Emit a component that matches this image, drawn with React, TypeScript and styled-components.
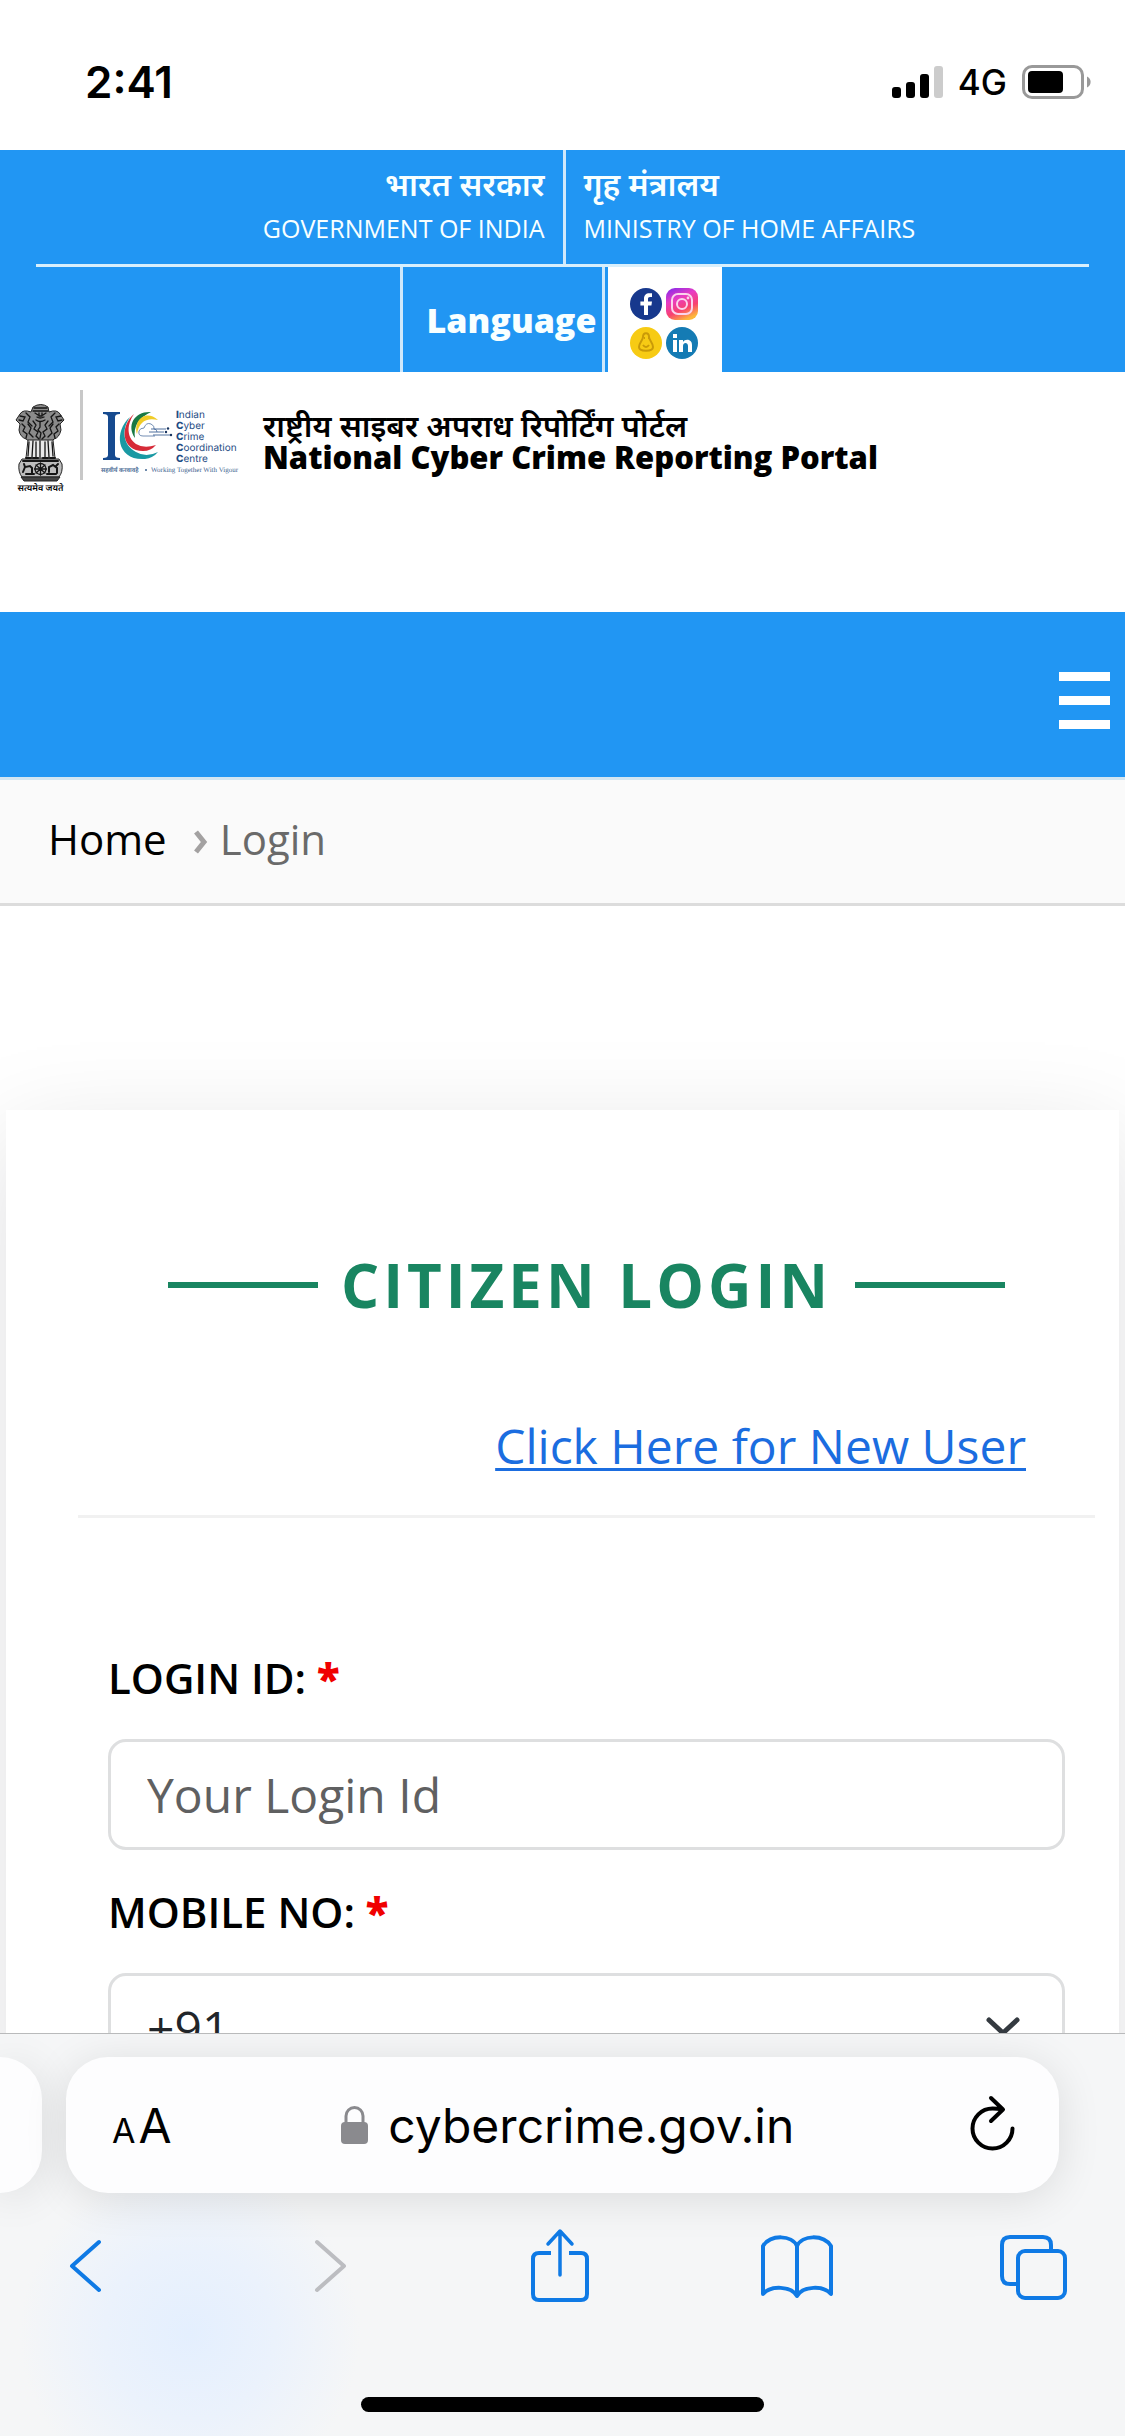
import React from "react";
import styled, { createGlobalStyle, css } from "styled-components";

const BLUE = "#2196f3";
const IOS_BLUE = "#0f7ae5";
const SITE_FONT = `"Open Sans", "Noto Sans Devanagari", "Noto Sans", sans-serif`;
const SYSTEM_FONT = `Inter, "Liberation Sans", sans-serif`;

const GlobalStyle = createGlobalStyle`
  *, *::before, *::after { box-sizing: border-box; }
  body { margin: 0; background: #fff; color: #000; font-family: ${SITE_FONT}; }
  button { border: 0; padding: 0; background: none; color: inherit; font: inherit; cursor: pointer; }
  svg { display: block; flex: none; }
`;

const Screen = styled.div`
  display: flex;
  flex-direction: column;
  height: 100vh;
  overflow: hidden;
`;

/* ---------- status bar ---------- */

const StatusBar = styled.header`
  display: flex;
  flex: none;
  align-items: center;
  justify-content: space-between;
  height: 150px;
  padding: 14px 33px 0 85px;
  font-family: ${SYSTEM_FONT};
`;

const Clock = styled.time`
  font-size: 44px;
  font-weight: 600;
`;

const StatusIcons = styled.div`
  display: flex;
  align-items: center;
  gap: 15px;
  font-size: 35px;
  font-weight: 500;
`;

/* ---------- web page ---------- */

const Viewport = styled.main`
  flex: 1;
  min-height: 0;
  overflow: hidden auto;
  scrollbar-width: none;
`;

const GovBar = styled.div`
  padding: 0 36px;
  background: ${BLUE};
  color: #f8ffff;
`;

const Ministries = styled.div`
  display: grid;
  grid-template-columns: 1fr 1fr;
  border-bottom: 3px solid #d8effc;
`;

const Ministry = styled.p<{ $side: "left" | "right" }>`
  margin: 0;
  padding: 14px 18px 16px;
  font-size: 25px;
  line-height: 40px;
  font-weight: 500;
  ${(p) =>
    p.$side === "left"
      ? css`
          text-align: right;
        `
      : css`
          border-left: 3px solid #cfe8fb;
        `}
`;

const Hindi = styled.span`
  display: block;
  margin-bottom: 4px;
  font-size: 32px;
  font-weight: 600;
`;

const Tools = styled.div`
  display: flex;
  justify-content: center;
  gap: 3px;
  height: 105px;
  padding-right: 3px;
`;

const LanguageButton = styled.button`
  padding: 0 6px 0 24px;
  border: solid #cfe8fb;
  border-width: 0 3px;
  font-size: 34px;
  font-weight: 800;
`;

const SocialGrid = styled.div`
  display: grid;
  grid-template-columns: 34px 34px;
  place-content: center;
  gap: 5px 2px;
  padding: 8px 23px 0 21px;
  background: #fff;
`;

const SocialLink = styled.a`
  display: block;
  width: 34px;
  height: 34px;
`;

const Brand = styled.div`
  display: flex;
  align-items: flex-start;
  min-height: 240px;
  padding: 18px 15px 0;
  background: #fff;
`;

const EmblemBox = styled.div`
  padding-top: 14px;
`;

const BrandRule = styled.span`
  width: 3px;
  height: 90px;
  margin: 0 16px 0 14px;
  background: #c8c8c8;
`;

const BrandTitle = styled.h1`
  margin: 19px 0 0 20px;
  font-size: 31px;
  line-height: 32px;
  font-weight: 800;
`;

const BrandHindi = styled.span`
  display: block;
  font-weight: 600;
`;

const NavBar = styled.nav`
  display: flex;
  justify-content: flex-end;
  padding: 60px 15px 48px;
  background: ${BLUE};
`;

const MenuButton = styled.button`
  display: flex;
  flex-direction: column;
  gap: 15px;
`;

const MenuLine = styled.span`
  width: 51px;
  height: 9px;
  background: #fff;
`;

const Breadcrumb = styled.nav`
  display: flex;
  align-items: center;
  height: 129px;
  padding: 0 48px 6px;
  border: solid #dcdcdc;
  border-width: 3px 0;
  border-top-color: #d3e6f2;
  background: #fafafa;
  font-size: 42px;
`;

const CrumbLink = styled.a`
  color: #000;
  text-decoration: none;
`;

const CrumbArrow = styled.svg`
  margin: 6px 12px 0 27px;
`;

const CurrentCrumb = styled.span`
  color: #6a6a6a;
`;

const Card = styled.section`
  margin: 204px 6px 0;
  padding: 139px 24px 60px 72px;
  background: #fff;
  box-shadow: 0 30px 100px rgba(0, 10, 20, 0.13);
`;

const CardTitle = styled.h2`
  display: flex;
  align-items: center;
  justify-content: center;
  gap: 23px;
  margin: 0;
  color: #198561;
  font-size: 60px;
  line-height: 72px;
  font-weight: 700;
  letter-spacing: 4px;

  &::before,
  &::after {
    content: "";
    width: 150px;
    height: 6px;
    background: currentColor;
  }
`;

const NewUser = styled.div`
  display: flex;
  justify-content: flex-end;
  padding: 89px 69px 33px 0;
  border-bottom: 3px solid #f1f1f1;
  font-size: 48px;
  line-height: 72px;

  a {
    color: #1b6de0;
    text-decoration-thickness: 3px;
    text-underline-offset: 4px;
  }
`;

const Form = styled.form`
  padding: 98px 30px 0;
`;

const Label = styled.label`
  display: block;
  margin: 30px 0;
  font-size: 42px;
  line-height: 63px;
  font-weight: 600;
`;

const Required = styled.span`
  color: #f00000;
  font-weight: 800;
`;

const control = css`
  display: block;
  width: 100%;
  height: 111px;
  padding: 0 36px;
  border: 3px solid #dedfe0;
  border-radius: 18px;
  background: #fff;
  color: #212529;
  font: 400 48px ${SITE_FONT};
`;

const TextInput = styled.input`
  ${control}

  &::placeholder {
    color: #5f6061;
    opacity: 1;
  }
`;

const SelectWrap = styled.div`
  display: grid;
  align-items: center;

  > * {
    grid-area: 1 / 1;
  }
  > svg {
    justify-self: end;
    margin: 0 45px 3px 0;
    pointer-events: none;
  }
`;

const Select = styled.select`
  ${control}
  padding-bottom: 3px;
  appearance: none;
`;

/* ---------- browser chrome ---------- */

const BrowserChrome = styled.footer`
  flex: none;
  overflow: hidden;
  border-top: 1px solid #b9babb;
  background: radial-gradient(circle 170px at 190px 300px, #e4effe 0, #ebf2fc 50%, rgba(245, 246, 247, 0) 100%) #f5f6f7;
  font-family: ${SYSTEM_FONT};
`;

const Tabs = styled.div`
  display: flex;
  gap: 24px;
  padding: 23px 66px 0 0;
`;

const pill = css`
  height: 136px;
  background: #fdfdfe;
  box-shadow: 0 6px 44px rgba(0, 0, 0, 0.11);
`;

const PreviousTab = styled.div`
  ${pill}
  width: 42px;
  border-radius: 0 42px 42px 0;
`;

const AddressBar = styled.div`
  ${pill}
  display: flex;
  flex: 1;
  align-items: center;
  justify-content: space-between;
  padding: 0 44px 0 46px;
  border-radius: 42px;
`;

const TextSizeButton = styled.button`
  font-size: 34px;
`;

const BigA = styled.span`
  margin-left: 3px;
  font-size: 48px;
`;

const Address = styled.div`
  display: flex;
  align-items: center;
  gap: 20px;
  margin-right: 6px;
  font-size: 48px;
`;

const Toolbar = styled.div`
  display: flex;
  align-items: center;
  justify-content: space-between;
  padding: 35px 43px 0 38px;
`;

const ToolButton = styled.button<{ $muted?: boolean }>`
  display: flex;
  justify-content: center;
  width: 96px;
  color: ${(p) => (p.$muted ? "#bcbdc1" : IOS_BLUE)};
`;

const HomeIndicator = styled.div`
  width: 403px;
  height: 15px;
  margin: 93px auto 24px;
  border-radius: 8px;
  background: #000;
`;

/* ---------- drawings ---------- */

const Signal = () => (
  <svg width="51" height="32" viewBox="0 0 51 32" aria-label="Signal">
    <rect x="0" y="21" width="9" height="11" rx="3" />
    <rect x="14" y="16" width="9" height="16" rx="3" />
    <rect x="28" y="8" width="9" height="24" rx="3" />
    <rect x="42" y="0" width="9" height="32" rx="3" fill="#ccc" />
  </svg>
);

const Battery = () => (
  <svg width="70" height="34" viewBox="0 0 70 34" aria-label="Battery">
    <rect x="1.5" y="1.5" width="59" height="31" rx="8.5" fill="none" stroke="#999" strokeWidth="3" />
    <rect x="6" y="6" width="35" height="22" rx="4" />
    <path d="M65 11.5a6 6 0 0 1 0 11z" fill="#999" />
  </svg>
);

const Facebook = () => (
  <svg viewBox="0 0 34 34">
    <circle cx="17" cy="17" r="16" fill="#17388d" />
    <path d="M15 28V18.5h-3.6v-4H15v-2.7c0-3.6 2-5.6 5.4-5.6h2.6v3.9h-2c-1.5 0-2 .8-2 2v2.4h4l-.6 4H19V28z" fill="#fff" />
  </svg>
);

const Instagram = () => (
  <svg viewBox="0 0 34 34">
    <defs>
      <linearGradient id="insta" x1="0.15" y1="0" x2="0.6" y2="1">
        <stop offset="0" stopColor="#8a2be8" />
        <stop offset="0.35" stopColor="#e83cc4" />
        <stop offset="0.7" stopColor="#f8416f" />
        <stop offset="1" stopColor="#fdb83a" />
      </linearGradient>
    </defs>
    <rect x="1" y="1" width="32" height="32" rx="9" fill="url(#insta)" />
    <rect x="7" y="7" width="20" height="20" rx="6" fill="none" stroke="#fbd3ec" strokeWidth="2" />
    <circle cx="17" cy="17" r="5" fill="none" stroke="#fbd3ec" strokeWidth="2" />
    <circle cx="23" cy="11" r="1.4" fill="#fbd3ec" />
  </svg>
);

const Koo = () => (
  <svg viewBox="0 0 34 34">
    <circle cx="17" cy="17" r="16" fill="#f7cb14" />
    <path d="M14 11c0-5 6-5 6 0 0 3 4 6 4 10 0 5-14 5-14 0 0-4 4-7 4-10z" fill="none" stroke="#c99a08" strokeWidth="2" />
    <path d="M14 19q3 4 6 0M15 12h1m3 0h1" fill="none" stroke="#c99a08" strokeWidth="2" />
  </svg>
);

const LinkedIn = () => (
  <svg viewBox="0 0 34 34">
    <circle cx="17" cy="17" r="16" fill="#147bb4" />
    <path d="M8 14h4v12H8zM8 8h4v4H8zM14 14h4v2c2-3.400 9-3.200 9 3v7h-4v-6c0-4-5-4-5 0v6h-4z" fill="#fff" />
  </svg>
);

const Emblem = () => (
  <svg width="51" height="90" viewBox="0 0 51 90" role="img" aria-label="State Emblem of India">
    <g stroke="#222" strokeWidth="1" strokeLinejoin="round">
      <path d="M18 3q8-5 15 0l1 5q8-3 11 2l4 6-4 4 1 6q-2 8-7 9l-2 2H14l-3-2q-6-2-7-9l1-6-4-4 4-6q3-5 11-2z" fill="#8b8b8b" />
      <path d="M13 36h25l2 18H11z" fill="#e9e9e9" />
      <path d="M7 55h37l3 5q1 8-3 13H7q-4-5-3-13z" fill="#bdbdbd" />
      <path d="M6 73h39l-3 4H9z" fill="#444" />
    </g>
    <g fill="none" stroke="#151515" strokeWidth="1.300" strokeLinecap="round">
      <path d="M19 4h13M18 7h15M20 9l3 2m8-2l-3 2M22 13q3 2 7 0M24 9v3h3V9M21 16q4 3 9 0" />
      <path d="M5 12l5 1-2 4-4-1M46 12l-5 1 2 4 4-1M11 9l4 4-2 5 4 4M40 9l-4 4 2 5-4 4" />
      <path d="M7 20l3 3-2 4 4 3-1 4M44 20l-3 3 2 4-4 3 1 4M13 20l3 4-2 5 4 4M38 20l-3 4 2 5-4 4" />
      <path d="M18 17l3 4-2 4 4 3-2 4 3 3M33 17l-3 4 2 4-4 3 2 4-3 3M25 18v5l-2 3 3 3-1 5" />
      <path d="M14 38l-1 14M18 37l-1 16M21 38v15M25 37v16M30 38v15M33 37l1 16M37 38l1 14" />
      <path d="M11 54h5M18 54h5M28 54h5M35 54h5M8 57h35" strokeWidth="2" />
      <circle cx="25.500" cy="65" r="5.500" />
      <path d="M25.500 59v12M19.500 65h12M21 61l9 8M30 61l-9 8" />
      <path d="M8 68l2-5 5-1 2 2v5M10 63l-1-3M34 68v-5l4-2 4 3v5M41 62l2-2M11 70h8M32 70h9" strokeWidth="2" />
    </g>
    <text x="25.500" y="87" textAnchor="middle" fontSize="9" fontWeight="600" textRendering="geometricPrecision">सत्यमेव जयते</text>
  </svg>
);

const centreWords = ["Indian", "Cyber", "Crime", "Coordination", "Centre"];

const CentreLogo = () => (
  <svg width="144" height="90" viewBox="0 0 144 90" role="img" aria-label="Indian Cyber Crime Coordination Centre">
    <path d="M4 22h17v2q-5 0-5 3v38q0 3 5 3v2H4v-2q5 0 5-3V27q0-3-5-3z" fill="#164a8f" />
    <path d="M31 27C14 42 18 71 46 69q8-1 13-7-12 6-22 0C24 55 22 40 31 27z" fill="#1a99a3" />
    <path d="M35 24C20 37 23 61 44 61q8 0 13-6-12 4-20-1C27 47 28 34 35 24z" fill="#d62b38" />
    <path d="M52 22C36 21 27 35 36 48q-3-17 16-26z" fill="#187943" />
    <path d="M59 30C47 19 34 30 38 44q3-18 21-14z" fill="#f0cc28" />
    <path d="M56 46H44q-5 0-4-5 1-3 5-3 2-6 7-4 4 2 3 5 3 0 3 3" fill="#fff" stroke="#6482ac" strokeWidth="0.900" />
    <path d="M52 39h15M50 42h15M54 45h17" stroke="#244d86" strokeWidth="0.800" />
    <circle cx="69" cy="38.500" r="1.200" fill="#17335f" />
    <circle cx="67" cy="42" r="1.200" fill="#17335f" />
    <circle cx="72" cy="45" r="1.200" fill="#17335f" />
    <g fill="#1f4c84" fontFamily="Inter, sans-serif" fontSize="10" textRendering="geometricPrecision">
      {centreWords.map((word, i) => (
        <text key={word} x="77" y={28 + i * 11}>
          <tspan fontWeight="800">{word[0]}</tspan>
          {word.slice(1)}
        </text>
      ))}
    </g>
    <g fill="#3f6590" fontSize="6" fontWeight="600" textRendering="geometricPrecision">
      <text x="2" y="82">सहवीर्यं करवावहै</text>
      <circle cx="47" cy="80" r="1" />
      <text x="52" y="82" fontFamily="Liberation Serif, serif" fontSize="7" fontWeight="400">Working Together With Vigour</text>
    </g>
  </svg>
);

const Lock = () => (
  <svg width="27" height="40" viewBox="0 0 27 40" fill="#8a8a8e" aria-label="Secure">
    <rect x="0" y="17" width="27" height="22" rx="4" />
    <path d="M5 19v-8a8.500 8.500 0 0 1 17 0v8" fill="none" stroke="#8a8a8e" strokeWidth="3" />
  </svg>
);

const strokeProps = {
  fill: "none",
  stroke: "currentColor",
  strokeWidth: 4,
  strokeLinecap: "round" as const,
  strokeLinejoin: "round" as const,
};

const Reload = () => (
  <svg width="45" height="60" viewBox="0 0 45 60" {...strokeProps}>
    <path d="M42.500 33.500A20 20 0 1 1 22.500 13.500q5 0 10 1M21 3l12 11.500L21 26" />
  </svg>
);

const Back = () => (
  <svg width="36" height="76" viewBox="0 0 36 76" {...strokeProps}>
    <path d="M31 14L4 38l27 24" />
  </svg>
);

const Forward = () => (
  <svg width="50" height="76" viewBox="0 0 50 76" {...strokeProps}>
    <path d="M19 14l27 24-27 24" />
  </svg>
);

const Share = () => (
  <svg width="60" height="76" viewBox="0 0 60 76" {...strokeProps}>
    <path d="M21 25H9q-6 0-6 6v35q0 6 6 6h42q6 0 6-6V31q0-6-6-6H39" strokeLinecap="butt" />
    <path d="M30 47V4M18 16L30 3l12 13" strokeWidth="3.500" />
  </svg>
);

const Book = () => (
  <svg width="74" height="76" viewBox="0 0 74 76" {...strokeProps}>
    <path d="M37 18C32 7 11 6 3 18v48c8-9 28-8 34 2 6-10 26-11 34-2V18C63 6 42 7 37 18zV68" />
  </svg>
);

const TabsIcon = () => (
  <svg width="70" height="76" viewBox="0 0 70 76" {...strokeProps}>
    <rect x="19" y="23" width="47" height="47" rx="7" />
    <path d="M17 56h-6q-8 0-8-8V17q0-8 8-8h33q8 0 8 8v4" strokeLinecap="butt" />
  </svg>
);

const socials = [
  { name: "Facebook", Icon: Facebook },
  { name: "Instagram", Icon: Instagram },
  { name: "Koo", Icon: Koo },
  { name: "LinkedIn", Icon: LinkedIn },
];

export default function App() {
  return (
    <Screen>
      <GlobalStyle />
      <StatusBar>
        <Clock>2:41</Clock>
        <StatusIcons>
          <Signal />
          <span>4G</span>
          <Battery />
        </StatusIcons>
      </StatusBar>

      <Viewport>
        <GovBar>
          <Ministries>
            <Ministry $side="left">
              <Hindi lang="hi">भारत सरकार</Hindi>
              GOVERNMENT OF INDIA
            </Ministry>
            <Ministry $side="right">
              <Hindi lang="hi">गृह मंत्रालय</Hindi>
              MINISTRY OF HOME AFFAIRS
            </Ministry>
          </Ministries>
          <Tools>
            <LanguageButton type="button">Language</LanguageButton>
            <SocialGrid>
              {socials.map(({ name, Icon }) => (
                <SocialLink key={name} href="#" aria-label={name}>
                  <Icon />
                </SocialLink>
              ))}
            </SocialGrid>
          </Tools>
        </GovBar>

        <Brand>
          <EmblemBox>
            <Emblem />
          </EmblemBox>
          <BrandRule />
          <CentreLogo />
          <BrandTitle>
            <BrandHindi lang="hi">राष्ट्रीय साइबर अपराध रिपोर्टिंग पोर्टल</BrandHindi>
            National Cyber Crime Reporting Portal
          </BrandTitle>
        </Brand>

        <NavBar aria-label="Main">
          <MenuButton type="button" aria-label="Menu">
            <MenuLine />
            <MenuLine />
            <MenuLine />
          </MenuButton>
        </NavBar>

        <Breadcrumb aria-label="Breadcrumb">
          <CrumbLink href="#">Home</CrumbLink>
          <CrumbArrow width="14" height="24" viewBox="0 0 14 24" fill="none" stroke="#a3a1a1" strokeWidth="5">
            <path d="M2 2l8 10-8 10" />
          </CrumbArrow>
          <CurrentCrumb aria-current="page">Login</CurrentCrumb>
        </Breadcrumb>

        <Card>
          <CardTitle>CITIZEN LOGIN</CardTitle>
          <NewUser>
            <a href="#">Click Here for New User</a>
          </NewUser>
          <Form>
            <Label htmlFor="login-id">
              LOGIN ID: <Required>*</Required>
            </Label>
            <TextInput id="login-id" type="text" placeholder="Your Login Id" />
            <Label htmlFor="country-code">
              MOBILE NO: <Required>*</Required>
            </Label>
            <SelectWrap>
              <Select id="country-code" defaultValue="+91">
                <option>+91</option>
              </Select>
              <svg width="34" height="20" viewBox="0 0 34 20" {...strokeProps} stroke="#343a40" strokeWidth={5}>
                <path d="M3 3l14 13L31 3" />
              </svg>
            </SelectWrap>
          </Form>
        </Card>
      </Viewport>

      <BrowserChrome>
        <Tabs>
          <PreviousTab />
          <AddressBar>
            <TextSizeButton type="button" aria-label="Text size">
              A<BigA>A</BigA>
            </TextSizeButton>
            <Address>
              <Lock />
              cybercrime.gov.in
            </Address>
            <button type="button" aria-label="Reload">
              <Reload />
            </button>
          </AddressBar>
        </Tabs>
        <Toolbar>
          <ToolButton type="button" aria-label="Back">
            <Back />
          </ToolButton>
          <ToolButton type="button" aria-label="Forward" $muted>
            <Forward />
          </ToolButton>
          <ToolButton type="button" aria-label="Share">
            <Share />
          </ToolButton>
          <ToolButton type="button" aria-label="Bookmarks">
            <Book />
          </ToolButton>
          <ToolButton type="button" aria-label="Tabs">
            <TabsIcon />
          </ToolButton>
        </Toolbar>
        <HomeIndicator />
      </BrowserChrome>
    </Screen>
  );
}
